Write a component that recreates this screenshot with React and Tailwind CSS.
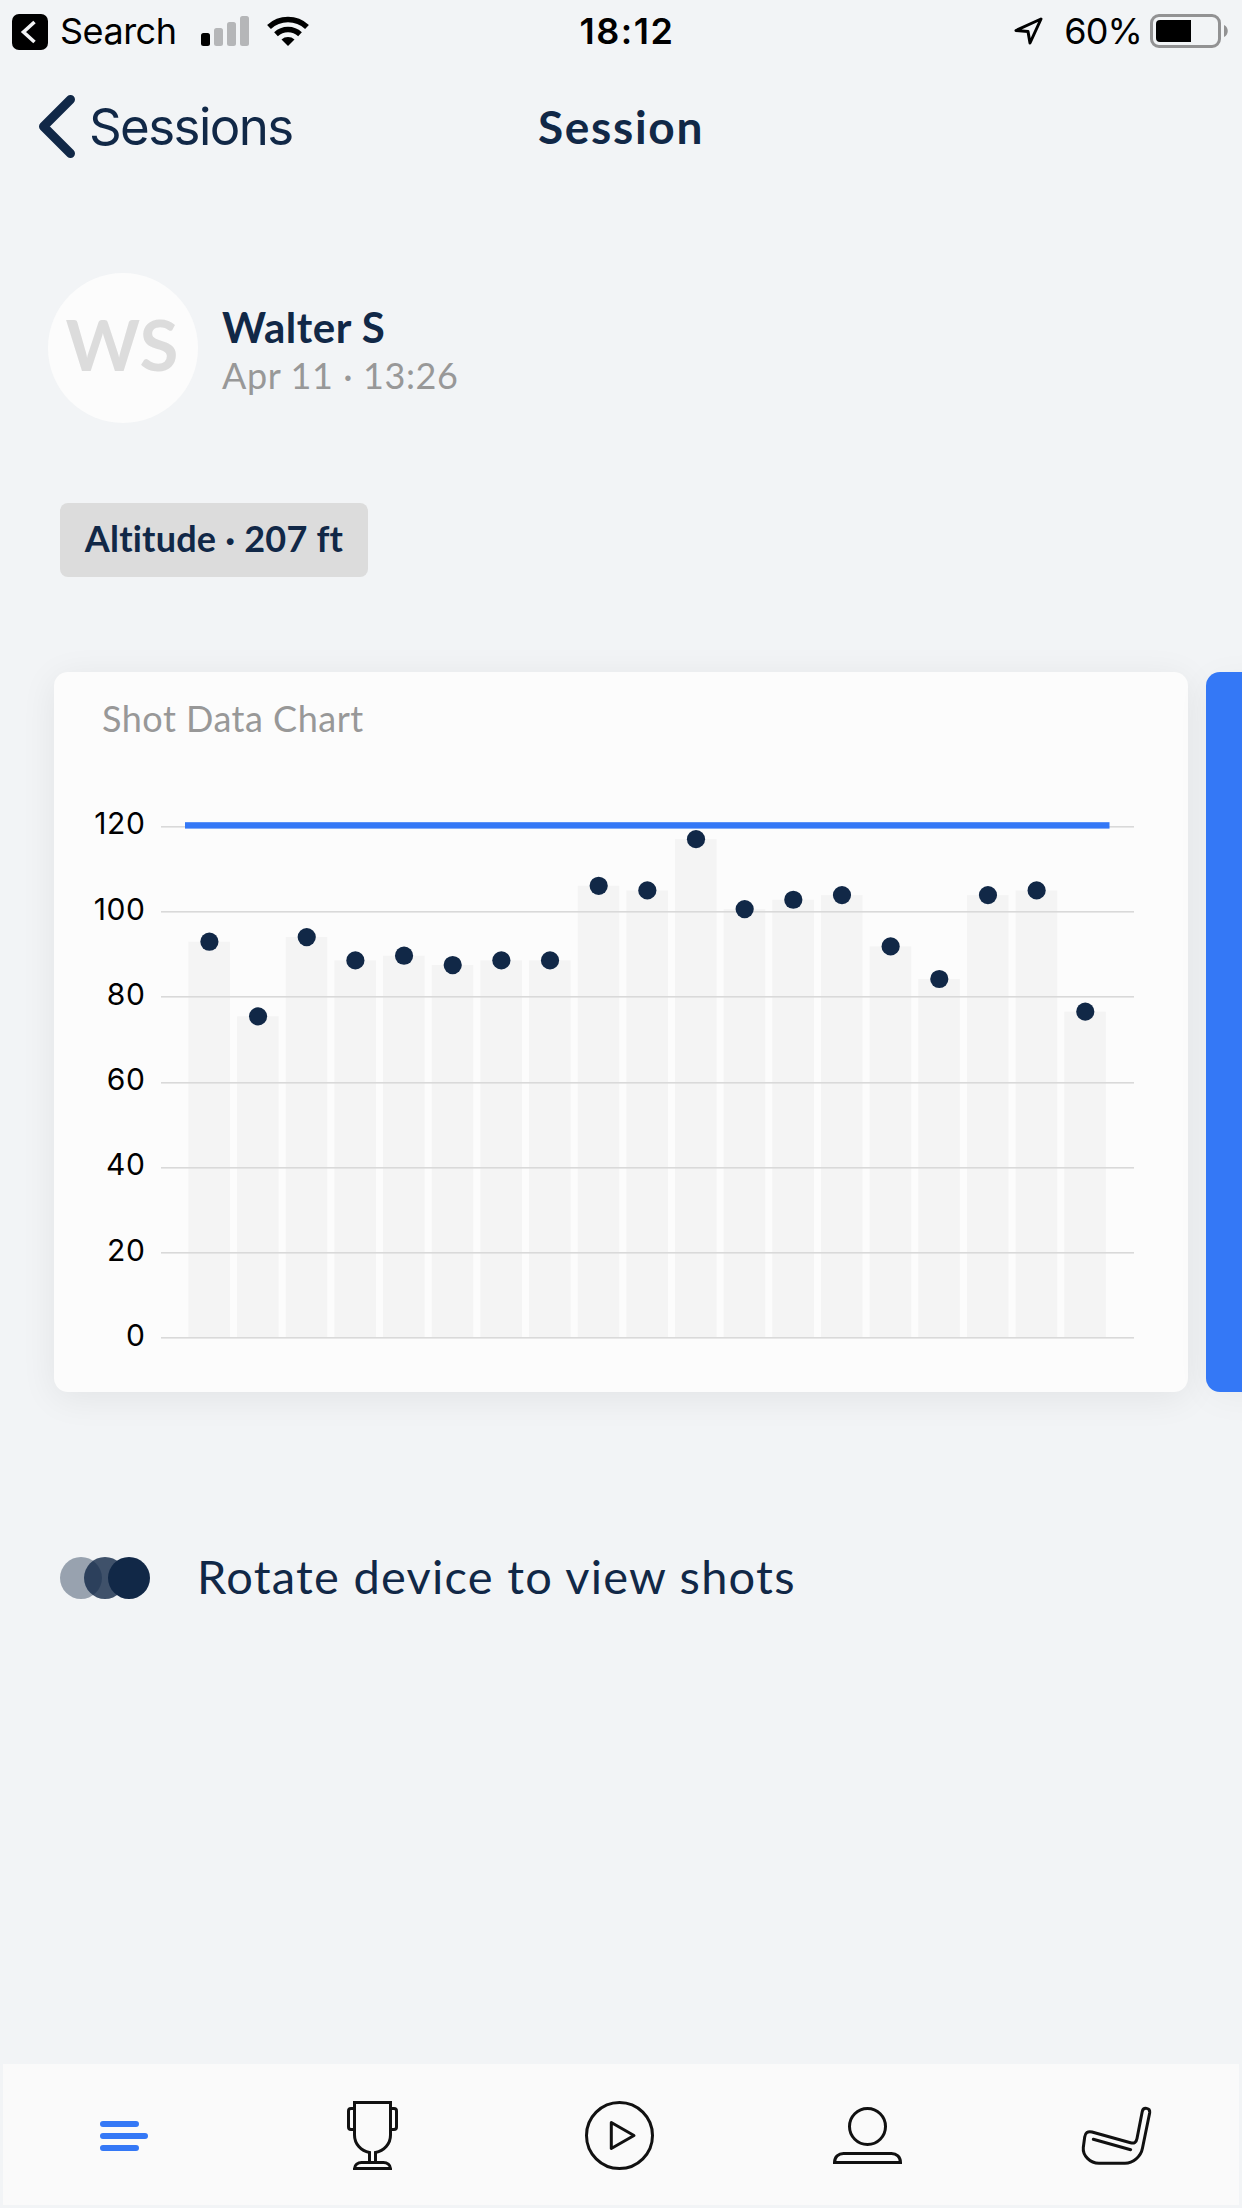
import React from 'react';

// Shot distances in yards
const shots = [
  92.96, 75.46, 94.05, 88.58, 89.68, 87.49, 88.58, 88.58, 106.08, 104.99,
  117.02, 100.61, 102.8, 103.89, 91.86, 84.21, 103.89, 104.99, 76.55,
];

const ticks = [120, 100, 80, 60, 40, 20, 0];

const BASELINE = 572;
const UNIT = 4.263;
const yFor = (value) => BASELINE - value * UNIT;
const xFor = (index) => 155.4 + index * 48.66;

const StatusBar = () => (
  <div className="flex h-[62px] items-center pl-3 pr-[13px] font-['Inter',sans-serif] text-[36px] leading-none text-black">
    <div className="flex flex-1 items-center">
      <svg className="mt-0.5 h-9 w-9" viewBox="0 0 36 36">
        <rect width="36" height="36" rx="7" />
        <path d="M22.5 8 L11.5 18 L22.5 28" fill="none" stroke="#f3f4f6" strokeWidth="3.6" />
      </svg>
      <span className="ml-[12px] w-[141px] tracking-[-0.5px]">Search</span>
      <svg className="h-[30px] w-12" viewBox="0 0 48 30">
        <rect x="0" y="17" width="9" height="13" rx="2.5" />
        <rect x="13" y="12" width="9" height="18" rx="2.5" fill="#b5b6b8" />
        <rect x="26" y="6" width="9" height="24" rx="2.5" fill="#b5b6b8" />
        <rect x="39" y="0" width="9" height="30" rx="2.5" fill="#b5b6b8" />
      </svg>
      <svg className="ml-[18px] h-[30px] w-[42px]" viewBox="0 0 42 30">
        <path d="M2 11 A28 28 0 0 1 40 11" fill="none" stroke="#000" strokeWidth="5.6" />
        <path d="M9 18.2 A17.5 17.5 0 0 1 33 18.2" fill="none" stroke="#000" strokeWidth="5.4" />
        <path d="M14.5 23.5 A10 10 0 0 1 27.5 23.5 L21 30 Z" />
      </svg>
    </div>
    <span className="ml-[13px] font-semibold tracking-[1.5px]">18:12</span>
    <div className="flex flex-1 items-center justify-end">
      <svg className="h-7 w-[29px]" viewBox="0 0 29 28">
        <path d="M27 2 L2 13.5 L14 14.5 L16 26 Z" fill="none" stroke="#000" strokeWidth="3" strokeLinejoin="round" />
      </svg>
      <span className="ml-[21px] tracking-[-0.9px]">60%</span>
      <svg className="ml-[8px] h-[34px] w-[79px]" viewBox="0 0 79 34">
        <rect x="1.5" y="1.5" width="68" height="31" rx="7.5" fill="none" stroke="#929293" strokeWidth="3" />
        <path d="M10 6 H41 V28 H10 A4 4 0 0 1 6 24 V10 A4 4 0 0 1 10 6 Z" />
        <path d="M74 11 C79 13 79 21 74 23 Z" fill="#929293" />
      </svg>
    </div>
  </div>
);

const Header = () => (
  <header className="grid h-[130px] grid-cols-3 items-center">
    <div className="flex items-center pl-[38px]">
      <svg className="mb-px h-[63px] w-[37px]" viewBox="0 0 37 63">
        <path d="M32.5 4.5 L5.5 31.5 L32.5 58.5" fill="none" stroke="#112847" strokeWidth="9" strokeLinecap="round" strokeLinejoin="round" />
      </svg>
      <span className="ml-[14px] mt-[-2px] font-['Inter',sans-serif] text-[51px] leading-none tracking-[-1.6px]">
        Sessions
      </span>
    </div>
    <h1 className="text-center text-[46px] font-bold leading-none tracking-[1.7px]">Session</h1>
  </header>
);

const Profile = () => (
  <section className="ml-12 mt-[81px] flex items-center">
    <div className="flex h-[150px] w-[150px] items-center justify-center rounded-full bg-[#fcfcfc] pb-[10px] pr-[2px] text-[71px] font-bold leading-none text-[#dcdcdc]">
      WS
    </div>
    <div className="ml-6 pt-[5px]">
      <p className="text-[42px] font-bold leading-[48px] tracking-[0.5px]">Walter S</p>
      <p className="text-[36px] leading-[48px] tracking-[0.6px] text-[#989898]">Apr 11 · 13:26</p>
    </div>
  </section>
);

const ShotChart = () => (
  <svg className="block h-[626px] w-[1134px]" viewBox="0 0 1134 626">
    {/* Bars */}
    {shots.map((value, index) => (
      <rect key={index} x={xFor(index) - 21} y={yFor(value)} width="41.6" height={value * UNIT} fill="#f4f4f4" />
    ))}

    {/* Grid and axis labels */}
    {ticks.map((tick) => (
      <g key={tick}>
        <rect x="107" y={Math.ceil(yFor(tick)) - 1} width="973" height="1.6" fill="#d9d9d9" />
        <text
          x="91.5"
          y={yFor(tick) + 8}
          textAnchor="end"
          className="font-['Inter',sans-serif] text-[30px] tracking-[0.6px]"
          fill="#000"
        >
          {tick}
        </text>
      </g>
    ))}

    {/* Target line */}
    <rect x="131" y="56.2" width="924.5" height="6.4" fill="#3478f6" />

    {/* Shots */}
    {shots.map((value, index) => (
      <circle key={index} cx={xFor(index)} cy={yFor(value)} r="9.1" fill="#112847" />
    ))}
  </svg>
);

const icons = [
  {
    name: 'Sessions',
    drawing: (
      <g stroke="#3478f6" strokeWidth="6" strokeLinecap="round">
        <path d="M15 24 H48 M15 36 H57 M15 48 H48" />
      </g>
    ),
  },
  {
    name: 'Awards',
    drawing: (
      <>
        <path d="M33.5 62 V52.5 C25 51 18.5 44 18.5 35 V2.5 H54.5 V35 C54.5 44 48 51 39.5 52.5 V62" />
        <path d="M18.5 8.5 H15 Q12.5 8.5 12.5 11 V27 Q12.5 29.5 15 29.5 H18.5" />
        <path d="M54.5 8.5 H58 Q60.5 8.5 60.5 11 V27 Q60.5 29.5 58 29.5 H54.5" />
        <path d="M18.5 68.5 H54.5 C54.5 65 51 62.5 47.5 62.5 H25.5 C22 62.5 18.5 65 18.5 68.5 Z" />
      </>
    ),
  },
  {
    name: 'Play',
    drawing: (
      <>
        <circle cx="35.5" cy="35.5" r="33" />
        <path d="M27.3 22.5 L50 35.5 L27.3 48.5 Z" strokeLinejoin="round" />
      </>
    ),
  },
  {
    name: 'Profile',
    drawing: (
      <>
        <circle cx="35.5" cy="26.5" r="18" />
        <path d="M2.5 62.5 H68.5 C68.5 57 64.5 53.5 59.5 53.5 H11.5 C6.5 53.5 2.5 57 2.5 62.5 Z" />
      </>
    ),
  },
  {
    name: 'Clubs',
    drawing: (
      <g strokeLinecap="round">
        <path d="M12 32 L50.5 42.7 Q56 44.3 57 38.5 L62.3 11.3 C63.3 6.8 70.3 7.5 69.7 12.7 L62.5 48 C61 56.5 53 63.3 45 63.3 H19 C10 63.3 2.5 55.5 3.3 47.5 L4.7 37 Q5.5 30.5 12 32 Z" />
        <path d="M13.3 39.3 L50.7 49.7" />
      </g>
    ),
  },
];

const TabBar = () => (
  <nav className="mx-[3px] mb-[3px] mt-auto flex h-[141px] items-center justify-between bg-[#fafafa] pl-[85px] pr-[87px] pt-[3px]">
    {icons.map((icon) => (
      <button key={icon.name} aria-label={icon.name}>
        <svg className="block h-[72px] w-[72px]" viewBox="0 0 72 72" fill="none" stroke="#111" strokeWidth="3">
          {icon.drawing}
        </svg>
      </button>
    ))}
  </nav>
);

const App = () => {
  return (
    <div className="flex h-[2208px] w-[1242px] flex-col overflow-hidden bg-[#f2f4f6] font-['Lato',sans-serif] text-[#112847]">
      <StatusBar />
      <Header />
      <Profile />

      {/* Conditions */}
      <div className="ml-[60px] mt-20 flex h-[74px] w-[308px] items-center justify-center rounded-lg bg-[#dcdcdc] pb-[5px] text-[36px] font-bold leading-none tracking-[0.2px]">
        Altitude · 207 ft
      </div>

      {/* Cards */}
      <div className="ml-[54px] mt-[95px] flex h-[720px] gap-[18px]">
        <section className="w-[1134px] shrink-0 rounded-[14px] bg-[#fcfcfc] shadow-[0_6px_36px_rgba(0,0,0,0.07)]">
          <h2 className="h-[94px] pl-[48px] text-[36px] leading-[93px] tracking-[0.5px] text-[#989898]">Shot Data Chart</h2>
          <ShotChart />
        </section>
        <section className="w-[1134px] shrink-0 rounded-[14px] bg-[#3478f6] shadow-[0_6px_36px_rgba(0,0,0,0.04)]" />
      </div>

      {/* Rotate hint */}
      <div className="ml-[60px] mt-[162px] flex h-12 items-center">
        <svg className="h-[42px] w-[90px]" viewBox="0 0 90 42" fill="#112847">
          <circle cx="21" cy="21" r="21" opacity="0.4" />
          <circle cx="45" cy="21" r="21" opacity="0.8" />
          <circle cx="69" cy="21" r="21" />
        </svg>
        <p className="ml-[47px] pb-[4px] text-[47px] leading-none tracking-[1.25px]">Rotate device to view shots</p>
      </div>

      <TabBar />
    </div>
  );
};

export default App;
